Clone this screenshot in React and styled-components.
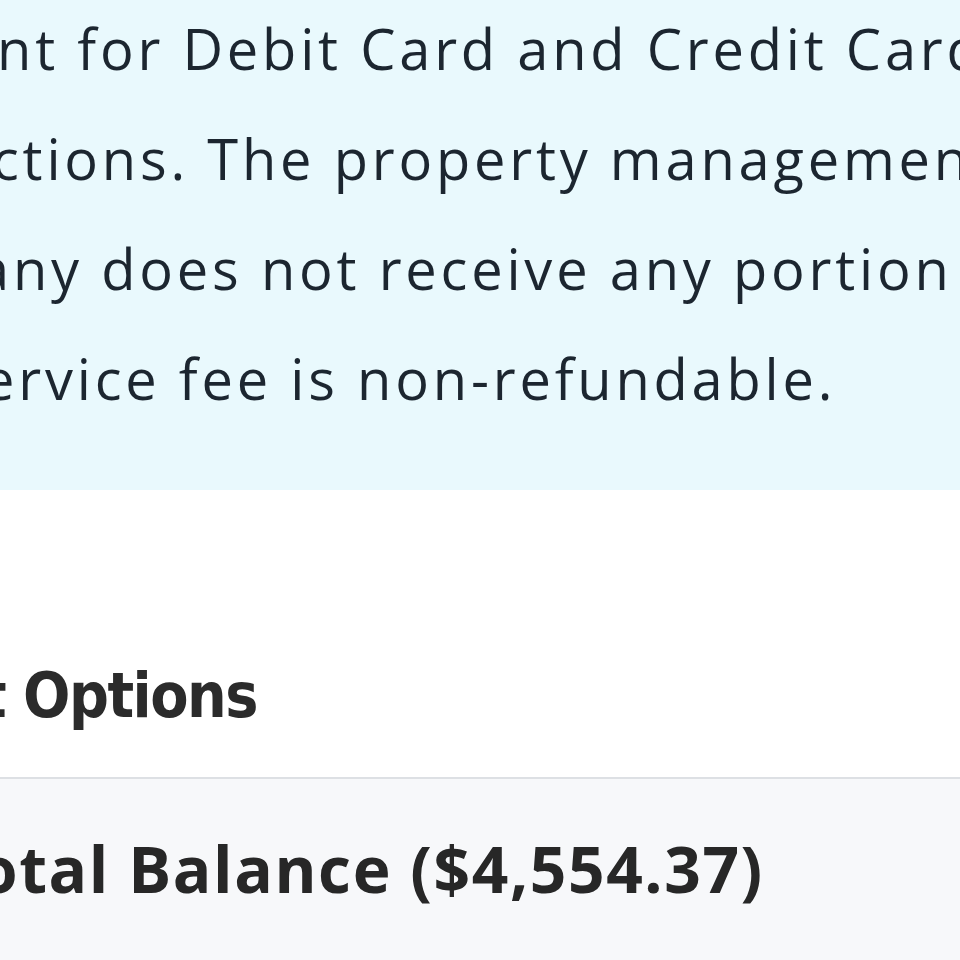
import React from 'react'
import styled, { createGlobalStyle } from 'styled-components'

const GlobalStyle = createGlobalStyle`
  html, body {
    margin: 0;
    padding: 0;
    background: #ffffff;
  }
`

const Page = styled.main`
  width: 960px;
  height: 960px;
  overflow: hidden;
  background: #ffffff;
  display: flex;
  flex-direction: column;
`

const Notice = styled.section`
  background: #e9f9fd;
  margin-top: -7px;
  padding-bottom: 57px;
  overflow: hidden;
`

const NoticeLine = styled.p`
  margin: 0 0 0 ${p => -p.shift}px;
  white-space: nowrap;
  font-family: "Open Sans", "DejaVu Sans", sans-serif;
  font-size: 56px;
  line-height: 110px;
  letter-spacing: 3.8px;
  color: #1c2630;
`

const Heading = styled.h2`
  margin: 0 0 0 ${p => -p.shift}px;
  padding: 168px 0 43px;
  white-space: nowrap;
  font-family: "DejaVu Sans", sans-serif;
  font-stretch: condensed;
  font-weight: 700;
  font-size: 62px;
  line-height: 76px;
  letter-spacing: -1.5px;
  color: #2b2b2b;
  border-bottom: 2px solid #dde0e4;
`

const BalanceRow = styled.div`
  flex: 1;
  background: #f7f8fa;
  padding-top: 50px;
`

const BalanceText = styled.div`
  margin-left: ${p => -p.shift}px;
  white-space: nowrap;
  font-family: "Open Sans", "DejaVu Sans", sans-serif;
  font-weight: 700;
  font-size: 64px;
  line-height: 80px;
  letter-spacing: 1.6px;
  color: #272727;
`

const lines = [
  { text: 'nt for Debit Card and Credit Card', shift: 3 },
  { text: 'ctions. The property management', shift: 8 },
  { text: 'any does not receive any portion of', shift: 22 },
  { text: 'ervice fee is non-refundable.', shift: 17 },
]

export default function App() {
  return (
    <>
      <GlobalStyle />
      <Page>
        <Notice>
          {lines.map(line => (
            <NoticeLine key={line.text} shift={line.shift}>{line.text}</NoticeLine>
          ))}
        </Notice>
        <Heading shift={20}>t Options</Heading>
        <BalanceRow>
          <BalanceText shift={22}>otal Balance ($4,554.37)</BalanceText>
        </BalanceRow>
      </Page>
    </>
  )
}
